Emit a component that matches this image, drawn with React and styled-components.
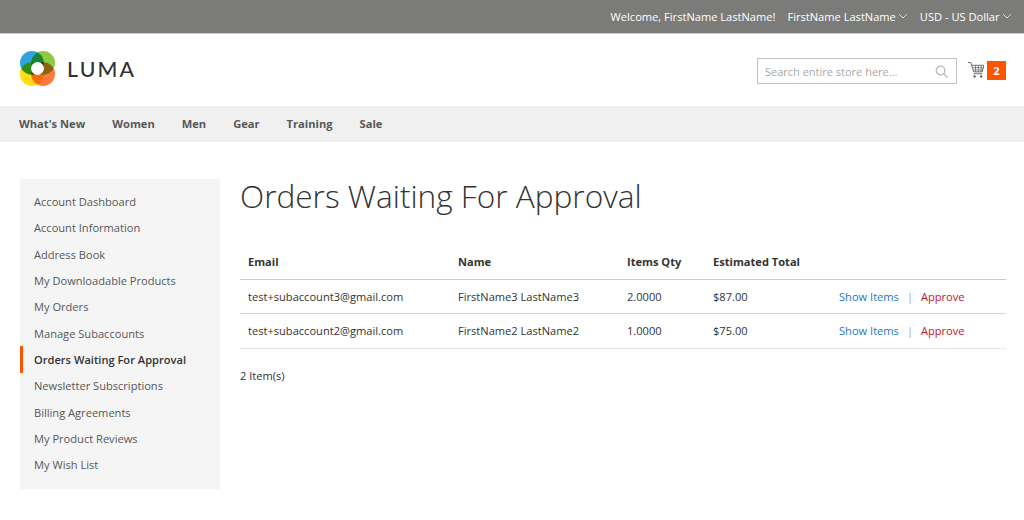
import React from 'react'
import styled, { createGlobalStyle } from 'styled-components'

const GlobalStyle = createGlobalStyle`
  html, body {
    margin: 0;
    padding: 0;
    background: #fff;
    font-family: "Open Sans", "Liberation Sans", sans-serif;
    color: #333;
  }
`;

const Page = styled.div`
  width: 1024px;
  height: 520px;
  overflow: hidden;
  background: #fff;
`;

const TopBar = styled.div`
  display: flex;
  justify-content: flex-end;
  align-items: center;
  gap: 12px;
  height: 32px;
  padding: 0 12.500px 1px 0;
  background: #7b7c79;
  border-bottom: 1px solid #c9c9c9;
  color: #fff;
  font-size: 11.100px;
  font-weight: 500;
`;

const TopItem = styled.span`
  display: flex;
  align-items: center;
  gap: 2px;
`;

const Header = styled.div`
  display: flex;
  justify-content: space-between;
  align-items: flex-start;
  height: 72px;
  padding: 0 18px 0 20px;
`;

const Logo = styled.div`
  display: flex;
  align-items: center;
  gap: 12px;
  margin-top: 17px;
`;

const LogoMark = styled.svg`
  display: block;
  isolation: isolate;

  circle {
    mix-blend-mode: multiply;
  }

  circle.hole {
    mix-blend-mode: normal;
  }
`;

const LogoText = styled.span`
  font-family: "Lato", sans-serif;
  font-size: 21.300px;
  font-weight: 500;
  letter-spacing: 2.200px;
  color: #333;
`;

const HeaderRight = styled.div`
  display: flex;
  align-items: center;
  margin-top: 24px;
`;

const Search = styled.div`
  display: flex;
  align-items: center;
  justify-content: space-between;
  box-sizing: border-box;
  width: 200px;
  height: 26px;
  padding: 0 8px 0 7px;
  border: 1px solid #c2c2c2;
  color: #a9a9a9;
  font-size: 11px;
`;

const Cart = styled.div`
  display: flex;
  align-items: center;
  gap: 3px;
  margin: -2px 0 0 11px;
`;

const Badge = styled.span`
  display: flex;
  align-items: center;
  justify-content: center;
  width: 19px;
  height: 19px;
  background: #ff5501;
  color: #fff;
  font-size: 11px;
  font-weight: 700;
`;

const Nav = styled.nav`
  display: flex;
  align-items: center;
  gap: 27px;
  box-sizing: border-box;
  height: 36px;
  padding: 0 0 1px 19px;
  background: #f0f0f0;
  color: #575757;
  font-size: 11.150px;
  font-weight: 700;
`;

const Content = styled.div`
  display: flex;
  align-items: flex-start;
  gap: 20px;
  padding: 37px 18px 0 20px;
`;

const Sidebar = styled.ul`
  box-sizing: border-box;
  width: 200px;
  height: 310px;
  margin: 0;
  padding: 9.500px 0 0;
  list-style: none;
  background: #f5f5f5;
`;

const SideItem = styled.li`
  display: flex;
  align-items: center;
  height: 26.300px;
  padding-left: ${p => (p.$active ? '11px' : '14px')};
  border-left: ${p => (p.$active ? '3px solid #ff5501' : 'none')};
  color: ${p => (p.$active ? '#333' : '#575757')};
  font-size: 11.100px;
  font-weight: ${p => (p.$active ? 600 : 400)};
`;

const Main = styled.div`
  flex: 1;
  min-width: 0;
`;

const Title = styled.h1`
  margin: 0 0 33px;
  font-size: 31.600px;
  line-height: 34px;
  font-weight: 300;
  color: #333;
`;

const Table = styled.table`
  width: 766px;
  border-collapse: collapse;
  table-layout: fixed;
  font-size: 11.100px;
  color: #333;

  tbody tr:last-child td {
    border-bottom-color: #e6e6e6;
  }
`;

const Th = styled.th`
  box-sizing: border-box;
  height: 33px;
  padding: 0 8px 2px;
  text-align: left;
  font-weight: 700;
  width: ${p => p.$w}px;
  border-bottom: 1px solid #ccc;
`;

const Td = styled.td`
  height: 33.500px;
  padding: 0 8px;
  border-bottom: 1px solid #d4d4d4;
`;

const ActionCell = styled(Td)`
  white-space: nowrap;
`;

const ShowLink = styled.a`
  color: #1979c3;
`;

const ApproveLink = styled.a`
  color: #c8102e;
`;

const Sep = styled.span`
  margin: 0 8px;
  color: #a6a6a6;
`;

const Count = styled.div`
  margin-top: 19px;
  font-size: 11.100px;
  color: #333;
`;

const Chevron = () => (
  <svg width="10" height="6" viewBox="0 0 10 6" fill="none" stroke="#d8d8d8" strokeWidth="1">
    <path d="M1 1l4 4 4-4" />
  </svg>
);

const LumaMark = () => (
  <LogoMark width="35" height="35" viewBox="0 0 35 35">
    <circle cx="11.900" cy="11.900" r="11.900" fill="#2fa4e0" />
    <circle cx="23.100" cy="11.900" r="11.900" fill="#8fca3f" />
    <circle cx="11.900" cy="23.100" r="11.900" fill="#ffdc14" />
    <circle cx="23.100" cy="23.100" r="11.900" fill="#fb7b3c" />
    <circle className="hole" cx="17.500" cy="17.500" r="6.500" fill="#fff" />
  </LogoMark>
);

const CartIcon = () => (
  <svg width="16" height="18" viewBox="0 0 17 18" fill="none" stroke="#666" strokeWidth="1">
    <path d="M0 1h3l3 10h9l2-7H4" />
    <path d="M5 6.500h11M6 9h10M8 4v7M11 4v7M14 4v7" strokeWidth="0.800" />
    <path d="M6 13h9" />
    <circle cx="7" cy="16" r="1.300" fill="#666" stroke="none" />
    <circle cx="14" cy="16" r="1.300" fill="#666" stroke="none" />
  </svg>
);

const SearchIcon = () => (
  <svg width="13" height="13" viewBox="0 0 13 13" fill="none" stroke="#b5b5b5" strokeWidth="1.200">
    <circle cx="5.500" cy="5.500" r="4.300" />
    <path d="M8.700 8.700L12.500 12.500" />
  </svg>
);

const sideLinks = [
  'Account Dashboard',
  'Account Information',
  'Address Book',
  'My Downloadable Products',
  'My Orders',
  'Manage Subaccounts',
  'Orders Waiting For Approval',
  'Newsletter Subscriptions',
  'Billing Agreements',
  'My Product Reviews',
  'My Wish List',
];

const orders = [
  { email: 'test+subaccount3@gmail.com', name: 'FirstName3 LastName3', qty: '2.0000', total: '$87.00' },
  { email: 'test+subaccount2@gmail.com', name: 'FirstName2 LastName2', qty: '1.0000', total: '$75.00' },
];

function App() {
  return (
    <Page>
      <GlobalStyle />
      <TopBar>
        <TopItem>Welcome, FirstName LastName!</TopItem>
        <TopItem>FirstName LastName <Chevron /></TopItem>
        <TopItem>USD - US Dollar <Chevron /></TopItem>
      </TopBar>
      <Header>
        <Logo>
          <LumaMark />
          <LogoText>LUMA</LogoText>
        </Logo>
        <HeaderRight>
          <Search>
            <span>Search entire store here...</span>
            <SearchIcon />
          </Search>
          <Cart>
            <CartIcon />
            <Badge>2</Badge>
          </Cart>
        </HeaderRight>
      </Header>
      <Nav>
        <span>What's New</span>
        <span>Women</span>
        <span>Men</span>
        <span>Gear</span>
        <span>Training</span>
        <span>Sale</span>
      </Nav>
      <Content>
        <Sidebar>
          {sideLinks.map(link => (
            <SideItem key={link} $active={link === 'Orders Waiting For Approval'}>{link}</SideItem>
          ))}
        </Sidebar>
        <Main>
          <Title>Orders Waiting For Approval</Title>
          <Table>
            <thead>
              <tr>
                <Th $w={210}>Email</Th>
                <Th $w={169}>Name</Th>
                <Th $w={86}>Items Qty</Th>
                <Th $w={126}>Estimated Total</Th>
                <Th />
              </tr>
            </thead>
            <tbody>
              {orders.map(order => (
                <tr key={order.email}>
                  <Td>{order.email}</Td>
                  <Td>{order.name}</Td>
                  <Td>{order.qty}</Td>
                  <Td>{order.total}</Td>
                  <ActionCell>
                    <ShowLink>Show Items</ShowLink>
                    <Sep>|</Sep>
                    <ApproveLink>Approve</ApproveLink>
                  </ActionCell>
                </tr>
              ))}
            </tbody>
          </Table>
          <Count>2 Item(s)</Count>
        </Main>
      </Content>
    </Page>
  )
}

export default App
